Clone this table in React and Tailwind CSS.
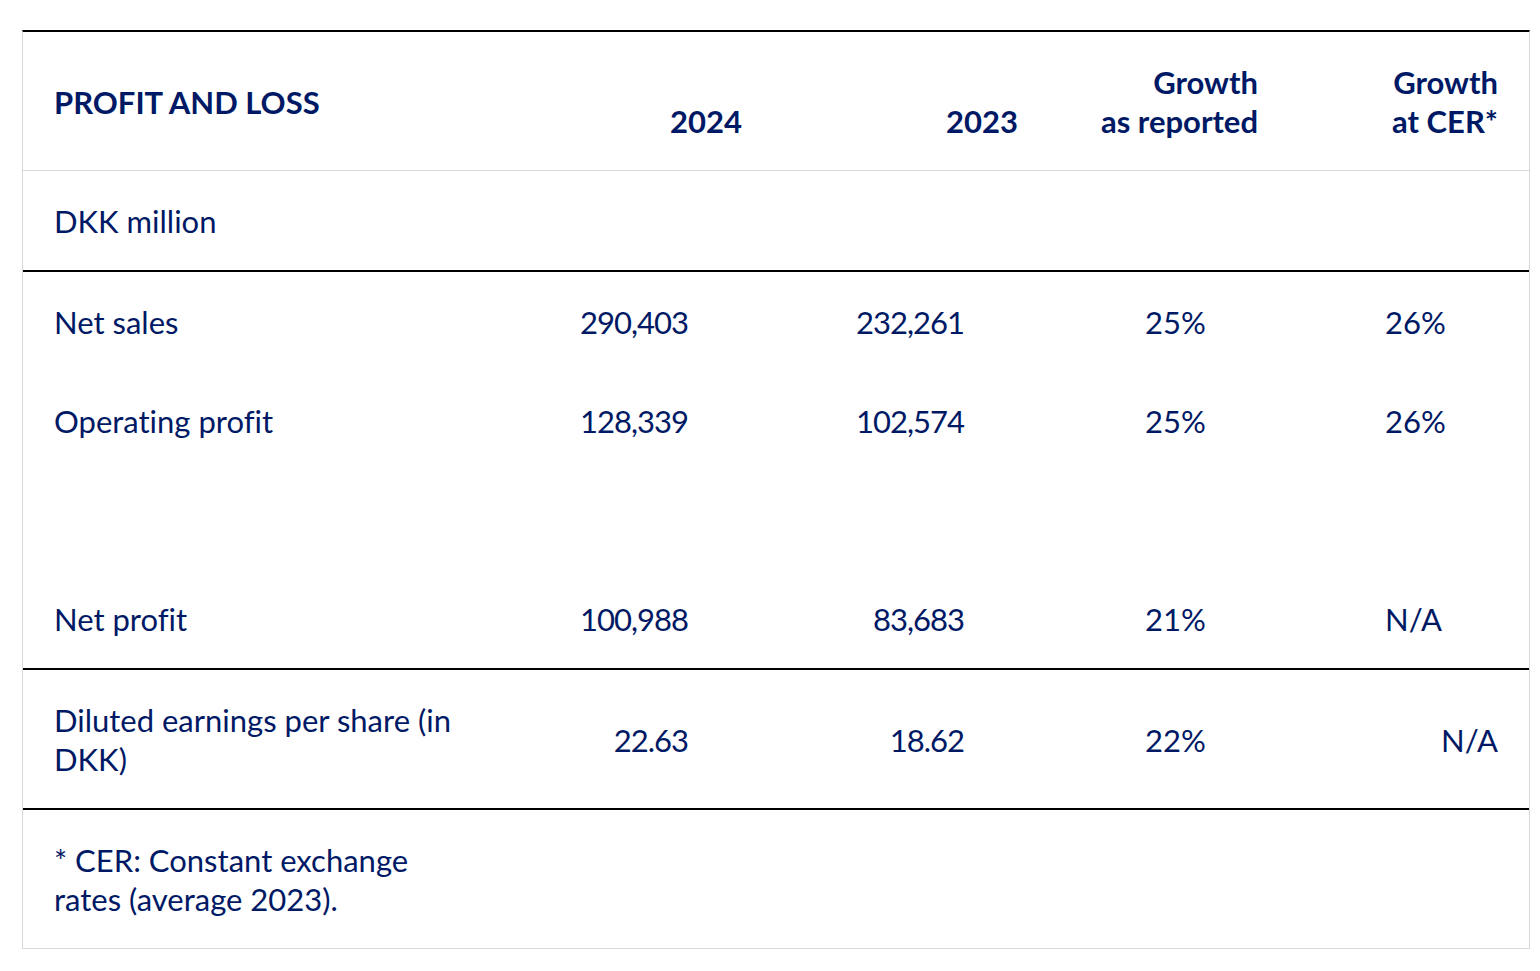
import React from 'react';

const font = { fontFamily: 'Lato, "Noto Sans", sans-serif' };

const rows = [
  { label: 'Net sales', y24: '290,403', y23: '232,261', rep: '25%', cer: '26%' },
  { label: 'Operating profit', y24: '128,339', y23: '102,574', rep: '25%', cer: '26%' },
  { label: '\u00a0', y24: '', y23: '', rep: '', cer: '' },
  { label: 'Net profit', y24: '100,988', y23: '83,683', rep: '21%', cer: 'N/A' },
];

const grid = 'grid grid-cols-[475px_276px_276px_240px_239px]';

const App = () => {
  return (
    <div className="min-h-screen bg-white pt-[30px] pl-[22px]" style={font}>
      <div className="w-[1508px] border-t-2 border-t-black border-x border-x-[#d8d8d8] border-b border-b-[#d8d8d8] text-[#001965] text-[31px] leading-[39px] [font-variant-ligatures:none]">
        {/* Header */}
        <div className={`${grid} font-bold border-b border-[#d8d8d8]`}>
          <div className="pl-[31px] pt-[31px] pb-[29px] flex items-center">PROFIT AND LOSS</div>
          <div className="pr-[32px] pt-[31px] pb-[29px] text-right">
            &nbsp;<br />2024
          </div>
          <div className="pr-[32px] pt-[31px] pb-[29px] text-right">
            &nbsp;<br />2023
          </div>
          <div className="pr-[32px] pt-[31px] pb-[29px] text-right">
            Growth<br />as reported
          </div>
          <div className="pr-[31px] pt-[31px] pb-[29px] text-right">
            Growth<br />at CER*
          </div>
        </div>

        {/* Unit row */}
        <div className={`${grid} border-b-2 border-black`}>
          <div className="pl-[31px] pt-[31px] pb-[29px]">DKK million</div>
          <div />
          <div />
          <div />
          <div />
        </div>

        {/* Body */}
        <div className="border-b-2 border-black">
          {rows.map((r, i) => (
            <div key={i} className={grid}>
              <div className="pl-[31px] pt-[31px] pb-[29px]">{r.label}</div>
              <div className="pr-[86px] pt-[31px] pb-[29px] text-right tracking-[-1px]">{r.y24}</div>
              <div className="pr-[86px] pt-[31px] pb-[29px] text-right tracking-[-1px]">{r.y23}</div>
              <div className="pl-[95px] pt-[31px] pb-[29px]">{r.rep}</div>
              <div className="pl-[95px] pt-[31px] pb-[29px]">{r.cer}</div>
            </div>
          ))}
        </div>

        {/* EPS */}
        <div className={`${grid} border-b-2 border-black items-center`}>
          <div className="pl-[31px] pt-[31px] pb-[29px]">
            Diluted earnings per share (in<br />DKK)
          </div>
          <div className="pr-[86px] pt-[2px] text-right tracking-[-1px]">22.63</div>
          <div className="pr-[86px] pt-[2px] text-right tracking-[-1px]">18.62</div>
          <div className="pl-[95px] pt-[2px]">22%</div>
          <div className="pr-[31px] pt-[2px] text-right">N/A</div>
        </div>

        {/* Footnote */}
        <div className="pl-[31px] pt-[31px] pb-[29px]">
          * CER: Constant exchange<br />rates (average 2023).
        </div>
      </div>
    </div>
  );
};

export default App;
